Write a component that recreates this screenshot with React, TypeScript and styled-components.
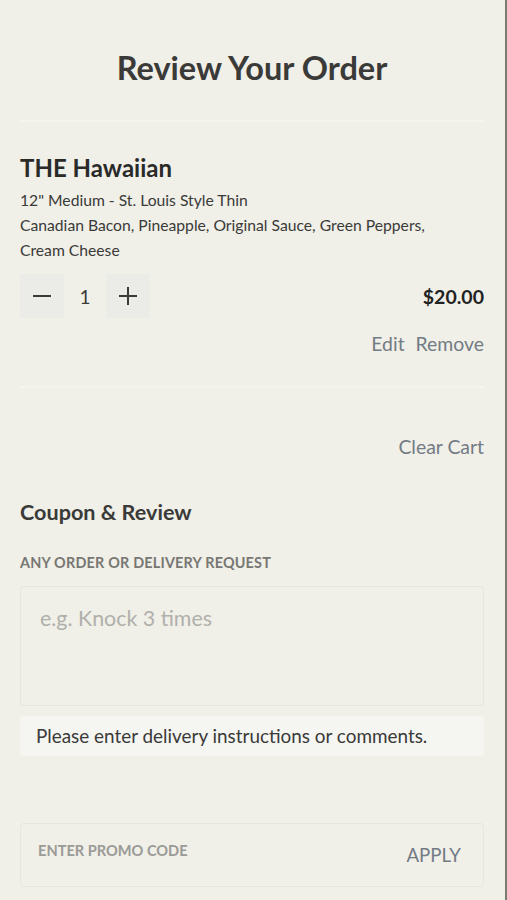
import React from "react";
import styled, { createGlobalStyle } from "styled-components";

const GlobalStyle = createGlobalStyle`
  html, body {
    margin: 0;
    padding: 0;
    background: #f0efe8;
  }
  body {
    font-family: Lato, "Open Sans", "Liberation Sans", sans-serif;
    color: #333;
  }
`;

const Page = styled.div`
  box-sizing: border-box;
  width: 507px;
  min-height: 900px;
  background: #f0efe8;
  border-right: 2px solid #7a7a72;
  padding: 0 21px 0 20px;
  display: flex;
  flex-direction: column;
`;

const Title = styled.h1`
  margin: 49px 0 0;
  font-size: 32.5px;
  line-height: 38px;
  font-weight: 700;
  text-align: center;
  color: #3a3a38;
`;

const Divider = styled.hr<{ $gap: number }>`
  border: none;
  height: 2px;
  background: #f4f3ee;
  margin: ${(p) => p.$gap}px 0 0;
`;

const ItemName = styled.h2`
  margin: 31px 0 0;
  font-size: 24px;
  line-height: 30px;
  font-weight: 700;
  color: #2a2a28;
`;

const ItemDetails = styled.div`
  margin-top: 5px;
  padding-right: 30px;
  font-size: 15.7px;
  line-height: 25px;
  color: #3a3a38;
`;

const QtyRow = styled.div`
  margin-top: 11px;
  display: flex;
  align-items: center;
  justify-content: space-between;
`;

const Stepper = styled.div`
  display: flex;
  align-items: center;
`;

const StepButton = styled.button`
  width: 44px;
  height: 44px;
  border: none;
  padding: 0;
  background: #ebebe7;
  color: #3a3a38;
  display: flex;
  align-items: center;
  justify-content: center;
`;

const Qty = styled.span`
  width: 42px;
  text-align: center;
  font-size: 19px;
  color: #3a3a38;
`;

const Price = styled.span`
  font-size: 19.5px;
  font-weight: 700;
  color: #222;
`;

const Actions = styled.div`
  margin-top: 15px;
  display: flex;
  justify-content: flex-end;
  gap: 11px;
`;

const LinkText = styled.span`
  font-size: 19.4px;
  line-height: 22px;
  color: #737b85;
`;

const ClearRow = styled.div`
  margin-top: 48px;
  display: flex;
  justify-content: flex-end;
`;

const SectionTitle = styled.h3`
  margin: 41px 0 0;
  font-size: 21.6px;
  line-height: 26px;
  font-weight: 700;
  color: #3a3a38;
`;

const FieldLabel = styled.div`
  margin-top: 29px;
  font-size: 14.4px;
  line-height: 18px;
  font-weight: 700;
  color: #777773;
  letter-spacing: 0.2px;
`;

const TextArea = styled.textarea`
  box-sizing: border-box;
  margin-top: 14px;
  width: 100%;
  height: 120px;
  resize: none;
  border: 1px solid #e6e5de;
  border-radius: 4px;
  background: #f0efe8;
  padding: 18px 19px;
  font-family: inherit;
  font-size: 21.4px;
  color: #333;
  outline: none;

  &::placeholder {
    color: #b0b0ab;
  }
`;

const Hint = styled.div`
  margin-top: 10px;
  background: #f5f5f2;
  border-radius: 4px;
  padding: 9px 16px;
  font-size: 18.9px;
  line-height: 22px;
  color: #3a3a38;
`;

const PromoBox = styled.div`
  box-sizing: border-box;
  margin-top: 67px;
  height: 64px;
  border: 1px solid #e6e5de;
  border-radius: 4px;
  display: flex;
  align-items: center;
  justify-content: space-between;
  padding: 0 22px 0 17px;
`;

const PromoLabel = styled.span`
  margin-top: -10px;
  font-size: 14.6px;
  font-weight: 700;
  color: #9a9a96;
`;

const ApplyText = styled.span`
  font-size: 18.7px;
  color: #737b85;
`;

const Line = ({ horizontal }: { horizontal?: boolean }) => (
  <svg width="20" height="20" viewBox="0 0 20 20" fill="none">
    <path d="M1 10h18" stroke="currentColor" strokeWidth="2" />
    {horizontal && <path d="M10 1v18" stroke="currentColor" strokeWidth="2" />}
  </svg>
);

export default function App() {
  return (
    <>
      <GlobalStyle />
      <Page>
        <Title>Review Your Order</Title>
        <Divider $gap={33} />

        <ItemName>THE Hawaiian</ItemName>
        <ItemDetails>
          12" Medium - St. Louis Style Thin
          <br />
          Canadian Bacon, Pineapple, Original Sauce, Green Peppers, Cream Cheese
        </ItemDetails>

        <QtyRow>
          <Stepper>
            <StepButton aria-label="Decrease">
              <Line />
            </StepButton>
            <Qty>1</Qty>
            <StepButton aria-label="Increase">
              <Line horizontal />
            </StepButton>
          </Stepper>
          <Price>$20.00</Price>
        </QtyRow>

        <Actions>
          <LinkText>Edit</LinkText>
          <LinkText>Remove</LinkText>
        </Actions>

        <Divider $gap={31} />

        <ClearRow>
          <LinkText>Clear Cart</LinkText>
        </ClearRow>

        <SectionTitle>Coupon &amp; Review</SectionTitle>
        <FieldLabel>ANY ORDER OR DELIVERY REQUEST</FieldLabel>
        <TextArea placeholder="e.g. Knock 3 times" />
        <Hint>Please enter delivery instructions or comments.</Hint>

        <PromoBox>
          <PromoLabel>ENTER PROMO CODE</PromoLabel>
          <ApplyText>APPLY</ApplyText>
        </PromoBox>
      </Page>
    </>
  );
}
